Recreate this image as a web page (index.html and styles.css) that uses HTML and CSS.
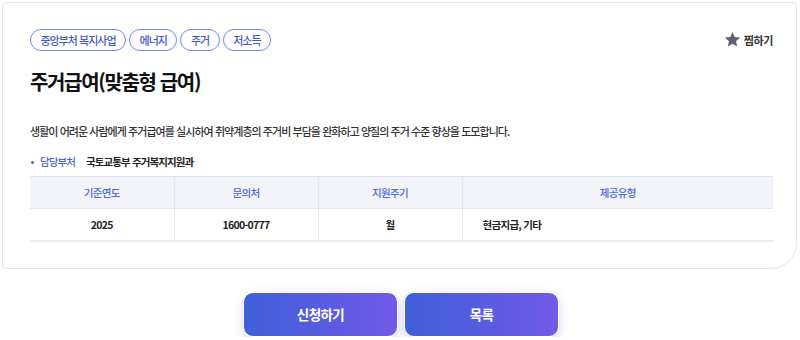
FILE: index.html
```html
<!DOCTYPE html>
<html lang="ko">
<head>
<meta charset="utf-8">
<link rel="stylesheet" href="styles.css">
</head>
<body>
<div class="page">
  <section class="card">
    <div class="top">
      <ul class="tags">
        <li class="tag">중앙부처 복지사업</li>
        <li class="tag">에너지</li>
        <li class="tag">주거</li>
        <li class="tag">저소득</li>
      </ul>
      <button class="bookmark" type="button">
        <svg class="star" viewBox="0 0 24 24" width="17" height="17" aria-hidden="true"><path d="M12 1.5l3.1 7.05 7.65.68-5.8 5.08 1.73 7.52L12 17.86l-6.68 3.97 1.73-7.52L1.25 9.23l7.65-.68z" fill="#5f6277"/></svg>
        <span>찜하기</span>
      </button>
    </div>
    <h1 class="title">주거급여(맞춤형 급여)</h1>
    <p class="desc">생활이 어려운 사람에게 주거급여를 실시하여 취약계층의 주거비 부담을 완화하고 양질의 주거 수준 향상을 도모합니다.</p>
    <div class="dept">
      <span class="dept-label">담당부처</span>
      <span class="dept-value">국토교통부 주거복지지원과</span>
    </div>
    <table class="info">
      <thead>
        <tr><th>기준연도</th><th>문의처</th><th>지원주기</th><th>제공유형</th></tr>
      </thead>
      <tbody>
        <tr><td>2025</td><td>1600-0777</td><td>월</td><td class="left">현금지급, 기타</td></tr>
      </tbody>
    </table>
  </section>
  <div class="actions">
    <button class="btn" type="button">신청하기</button>
    <button class="btn" type="button">목록</button>
  </div>
</div>
</body>
</html>
```

FILE: styles.css
```css
* { box-sizing: border-box; }
html, body { margin: 0; padding: 0; background: #ffffff; }
body {
  font-family: "Noto Sans CJK KR", "Noto Sans", sans-serif;
  color: #222;
}
.page { padding: 2px 3px 0 2px; }
.card {
  border: 1px solid #e6e6e8;
  border-radius: 4px 4px 26px 4px;
  padding: 26px 23px 26px 27px;
  background: #fff;
}
.top {
  display: flex;
  justify-content: space-between;
  align-items: flex-start;
}
.tags {
  list-style: none;
  margin: 0;
  padding: 0;
  display: flex;
  gap: 3px;
}
.tag {
  height: 22px;
  line-height: 20px;
  padding: 0 9.5px;
  border: 1px solid #6f8be6;
  border-radius: 11px;
  font-size: 11px;
  font-weight: 500;
  color: #3f5bc9;
  letter-spacing: -1px;
}
.bookmark {
  display: flex;
  align-items: center;
  gap: 3px;
  border: 0;
  background: none;
  padding: 0;
  margin-top: 2px;
  font-family: inherit;
  font-size: 11px;
  font-weight: 700;
  color: #333;
  letter-spacing: -0.4px;
}
.title {
  margin: 17px 0 0;
  font-size: 20px;
  line-height: 28px;
  font-weight: 700;
  color: #111;
  letter-spacing: -1.35px;
}
.desc {
  margin: 26px 0 0;
  font-size: 11px;
  line-height: 18px;
  font-weight: 500;
  color: #333;
  letter-spacing: -0.95px;
}
.dept {
  margin-top: 13px;
  display: flex;
  align-items: center;
  line-height: 18px;
  font-size: 10.5px;
  letter-spacing: -0.9px;
}
.dept-label {
  position: relative;
  padding-left: 10px;
  color: #4866d8;
  font-weight: 500;
  margin-right: 11px;
}
.dept-label::before {
  content: "";
  position: absolute;
  left: 1px;
  top: 8px;
  width: 3px;
  height: 3px;
  border-radius: 50%;
  background: #4866d8;
}
.dept-value { font-weight: 700; color: #222; }
.info {
  margin-top: 5px;
  width: 100%;
  border-collapse: collapse;
  table-layout: fixed;
  font-size: 10.5px;
  letter-spacing: -0.7px;
}
.info th, .info td {
  border-left: 1px solid #e3e5ec;
  text-align: center;
}
.info th:first-child, .info td:first-child { border-left: 0; }
.info th:nth-child(-n+3), .info td:nth-child(-n+3) { width: 144px; }
.info thead tr {
  background: #f3f4fa;
  border-top: 1px solid #dfe2ea;
  border-bottom: 1px solid #e3e5ec;
}
.info th {
  height: 32px;
  font-weight: 500;
  color: #4b69d9;
}
.info tbody tr { border-bottom: 2px solid #ececf0; }
.info td {
  height: 32px;
  font-weight: 700;
  color: #222;
}
.info td.left { text-align: left; padding-left: 20px; }
.actions {
  display: flex;
  justify-content: center;
  gap: 6px;
  margin-top: 23px;
  padding-left: 3px;
}
.btn {
  width: 155px;
  height: 45px;
  border: 1.5px solid #fff;
  border-radius: 10px;
  background: linear-gradient(90deg, #3f5fd8 0%, #5a5ce2 55%, #735ae9 100%);
  color: #fff;
  font-family: inherit;
  font-size: 13.5px;
  font-weight: 700;
  letter-spacing: -0.6px;
  box-shadow: 0 3px 10px rgba(90, 90, 200, 0.25);
}
```
